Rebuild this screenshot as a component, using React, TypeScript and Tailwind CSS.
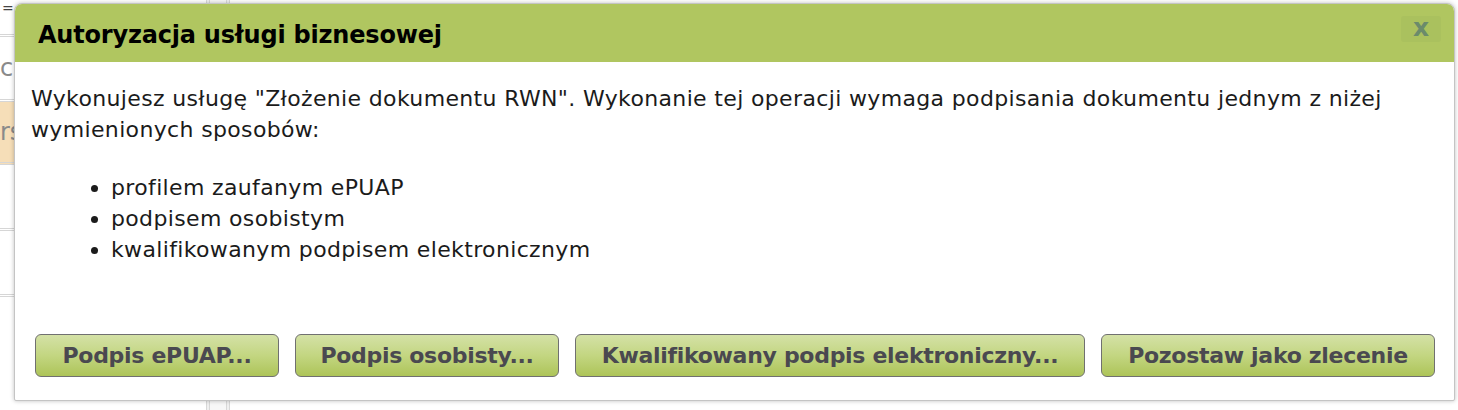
import React from "react";

const FONT = "[font-family:'DejaVu_Sans',sans-serif]";

function Btn({ label, w }: { label: string; w: string }) {
  return (
    <button
      className={`${w} h-[43px] rounded-[6px] border border-[#707070] bg-gradient-to-b from-[#d4e1a6] via-[#c3d681] to-[#adc458] text-[22px] font-bold text-[#4a4950] tracking-[-0.3px] leading-none`}
    >
      {label}
    </button>
  );
}

export default function App() {
  return (
    <div className={`relative w-[1458px] h-[410px] overflow-hidden bg-[#f3f3f3] ${FONT}`}>
      {/* background page */}
      <div className="flex h-full">
        <div className="w-[206px] flex flex-col bg-white text-[24px] text-[#8a8a8a]">
          <div className="h-[37px] border-b-[3px] border-double border-[#d6d6d6] pl-[2px] text-[#444] text-[14px] leading-[16px]">=</div>
          <div className="h-[65px] border-b-[3px] border-double border-[#d6d6d6] flex items-center">c</div>
          <div className="h-[63px] bg-[#f6deb8] border-b-[3px] border-double border-[#d6d6d6] flex items-center">rs</div>
          <div className="h-[66px] border-b-[3px] border-double border-[#d6d6d6]"></div>
          <div className="h-[66px] border-b-[3px] border-double border-[#d6d6d6]"></div>
          <div className="flex-1"></div>
        </div>
        <div className="w-[4px] border-x border-[#d8d8d8] bg-[#f0f0f0]"></div>
        <div className="w-[16px] bg-[#f7f7f7]"></div>
        <div className="w-[4px] border-x border-[#d8d8d8] bg-[#f0f0f0]"></div>
        <div className="flex-1 bg-white"></div>
      </div>

      {/* dialog */}
      <div className="absolute left-[14px] top-[3px] w-[1441px] h-[398px] rounded-t-[8px] rounded-b-[2px] border border-[#c4c4c4] bg-white shadow-[0_0_4px_rgba(0,0,0,0.25)] flex flex-col overflow-hidden">
        <div className="h-[58px] bg-[#b0c660] flex items-center justify-between pl-[23px] pr-[13px]">
          <h1 className="text-[24px] font-bold text-black tracking-[-0.2px] pt-[4px]">
            Autoryzacja usługi biznesowej
          </h1>
          <div className="w-[40px] h-[26px] mt-[-8px] rounded-[3px] bg-[#aac15e] flex items-center justify-center">
            <span className="text-[#6b8b6b] font-bold text-[25px] leading-none mt-[-4px]">x</span>
          </div>
        </div>
        <div className="flex-1 flex flex-col px-[16px] pt-[21px] text-[22px] leading-[31px] tracking-[0.35px] text-[#1b1b1b]">
          <p>
            Wykonujesz usługę "Złożenie dokumentu RWN". Wykonanie tej operacji wymaga podpisania dokumentu jednym z niżej
            wymienionych sposobów:
          </p>
          <ul className="list-disc pl-[80px] mt-[27px]">
            <li>profilem zaufanym ePUAP</li>
            <li>podpisem osobistym</li>
            <li>kwalifikowanym podpisem elektronicznym</li>
          </ul>
          <div className="mt-auto mb-[23px] ml-[4px] flex gap-[16px]">
            <Btn label="Podpis ePUAP..." w="w-[244px]" />
            <Btn label="Podpis osobisty..." w="w-[264px]" />
            <Btn label="Kwalifikowany podpis elektroniczny..." w="w-[510px]" />
            <Btn label="Pozostaw jako zlecenie" w="w-[334px]" />
          </div>
        </div>
      </div>
    </div>
  );
}
